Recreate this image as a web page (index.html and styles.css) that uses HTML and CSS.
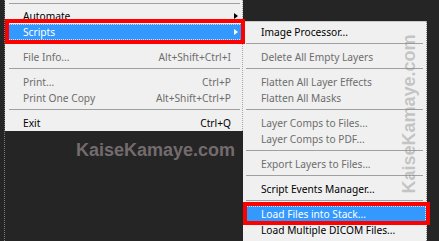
FILE: index.html
```html
<!DOCTYPE html>
<html>
<head>
<meta charset="utf-8">
<link rel="stylesheet" href="styles.css">
</head>
<body>
<div class="screen">
  <div class="edge"></div>
  <div class="left-col">
    <div class="menu main">
      <div class="sep top"></div>
      <div class="item">Automate<span class="arrow"></span></div>
      <div class="item active">Scripts<span class="arrow"></span></div>
      <div class="sep"></div>
      <div class="item dis">File Info...<span class="key">Alt+Shift+Ctrl+I</span></div>
      <div class="sep"></div>
      <div class="item dis">Print...<span class="key">Ctrl+P</span></div>
      <div class="item dis">Print One Copy<span class="key">Alt+Shift+Ctrl+P</span></div>
      <div class="sep"></div>
      <div class="item">Exit<span class="key">Ctrl+Q</span></div>
    </div>
    <div class="wm">KaiseKamaye.com</div>
  </div>
  <div class="sub-col">
    <div class="menu sub">
      <div class="item">Image Processor...</div>
      <div class="sep"></div>
      <div class="item dis">Delete All Empty Layers</div>
      <div class="sep"></div>
      <div class="item dis">Flatten All Layer Effects</div>
      <div class="item dis">Flatten All Masks</div>
      <div class="sep"></div>
      <div class="item dis">Layer Comps to Files...</div>
      <div class="item dis">Layer Comps to PDF...</div>
      <div class="sep"></div>
      <div class="item dis">Export Layers to Files...</div>
      <div class="sep"></div>
      <div class="item">Script Events Manager...</div>
      <div class="sep"></div>
      <div class="item active">Load Files into Stack...</div>
      <div class="item">Load Multiple DICOM Files...</div>
    </div>
  </div>
  <div class="vwm">KaiseKamaye.com</div>
  <div class="redbox box-scripts"></div>
  <div class="redbox box-load"></div>
</div>
</body>
</html>
```
FILE: styles.css
```css
html, body {
  margin: 0;
  padding: 0;
  background: #252525;
}
.screen {
  position: relative;
  display: flex;
  width: 439px;
  height: 241px;
  overflow: hidden;
  background: #252525;
  font-family: "Noto Sans", "Open Sans", sans-serif;
  font-size: 10.2px;
}
.edge {
  width: 4px;
  flex: none;
  border-right: 1px dotted #7a7a7a;
}
.left-col {
  width: 238px;
  flex: none;
  display: flex;
  flex-direction: column;
}
.menu {
  background: #f0f0f0;
  display: flex;
  flex-direction: column;
}
.main {
  height: 131px;
  border-right: 1px dotted #a5a5a5;
  box-sizing: border-box;
}
.item {
  height: 16px;
  display: flex;
  align-items: center;
  padding-left: 18px;
  color: #000;
  white-space: nowrap;
  flex: none;
}
.item.dis {
  color: #6d6d6d;
}
.item.active {
  background: #3399ff;
  color: #fff;
  outline: 1px dotted rgba(255, 255, 255, 0.7);
  outline-offset: -1px;
}
.key {
  margin-left: auto;
  margin-right: 11px;
}
.arrow {
  margin-left: auto;
  margin-right: 4px;
  width: 0;
  height: 0;
  border-left: 4px solid #000;
  border-top: 3.5px solid transparent;
  border-bottom: 3.5px solid transparent;
}
.active .arrow {
  border-left-color: #fff;
}
.sep {
  height: 1px;
  margin: 3px 2px 5px 4px;
  background: #a0a0a0;
  flex: none;
}
.sep.top {
  margin: 3px 2px 4px 4px;
}
.sub .sep {
  margin: 3px 3px 5px 3px;
}
.wm {
  padding: 9px 0 0 71px;
  font-family: "Liberation Sans", Arial, sans-serif;
  font-weight: bold;
  font-size: 18px;
  line-height: 20px;
  color: #736b6e;
}
.sub-col {
  width: 184px;
  flex: none;
  padding-top: 21px;
  box-sizing: border-box;
}
.sub {
  height: 100%;
  border-top: 1px solid #c8c8c8;
  border-right: 1px dotted #8a8a8a;
  padding-top: 2px;
  box-sizing: border-box;
  overflow: hidden;
}
.vwm {
  position: absolute;
  left: 329px;
  top: 104px;
  width: 160px;
  height: 20px;
  line-height: 20px;
  text-align: center;
  transform: rotate(-90deg);
  font-family: "Liberation Sans", Arial, sans-serif;
  font-weight: bold;
  font-size: 18px;
  color: rgba(140, 140, 140, 0.45);
}
.redbox {
  position: absolute;
  border: 4px solid #ff0000;
  box-sizing: border-box;
}
.box-scripts {
  left: 5px;
  top: 19px;
  width: 240px;
  height: 25px;
}
.box-load {
  left: 243px;
  top: 202px;
  width: 187px;
  height: 23px;
}
```
